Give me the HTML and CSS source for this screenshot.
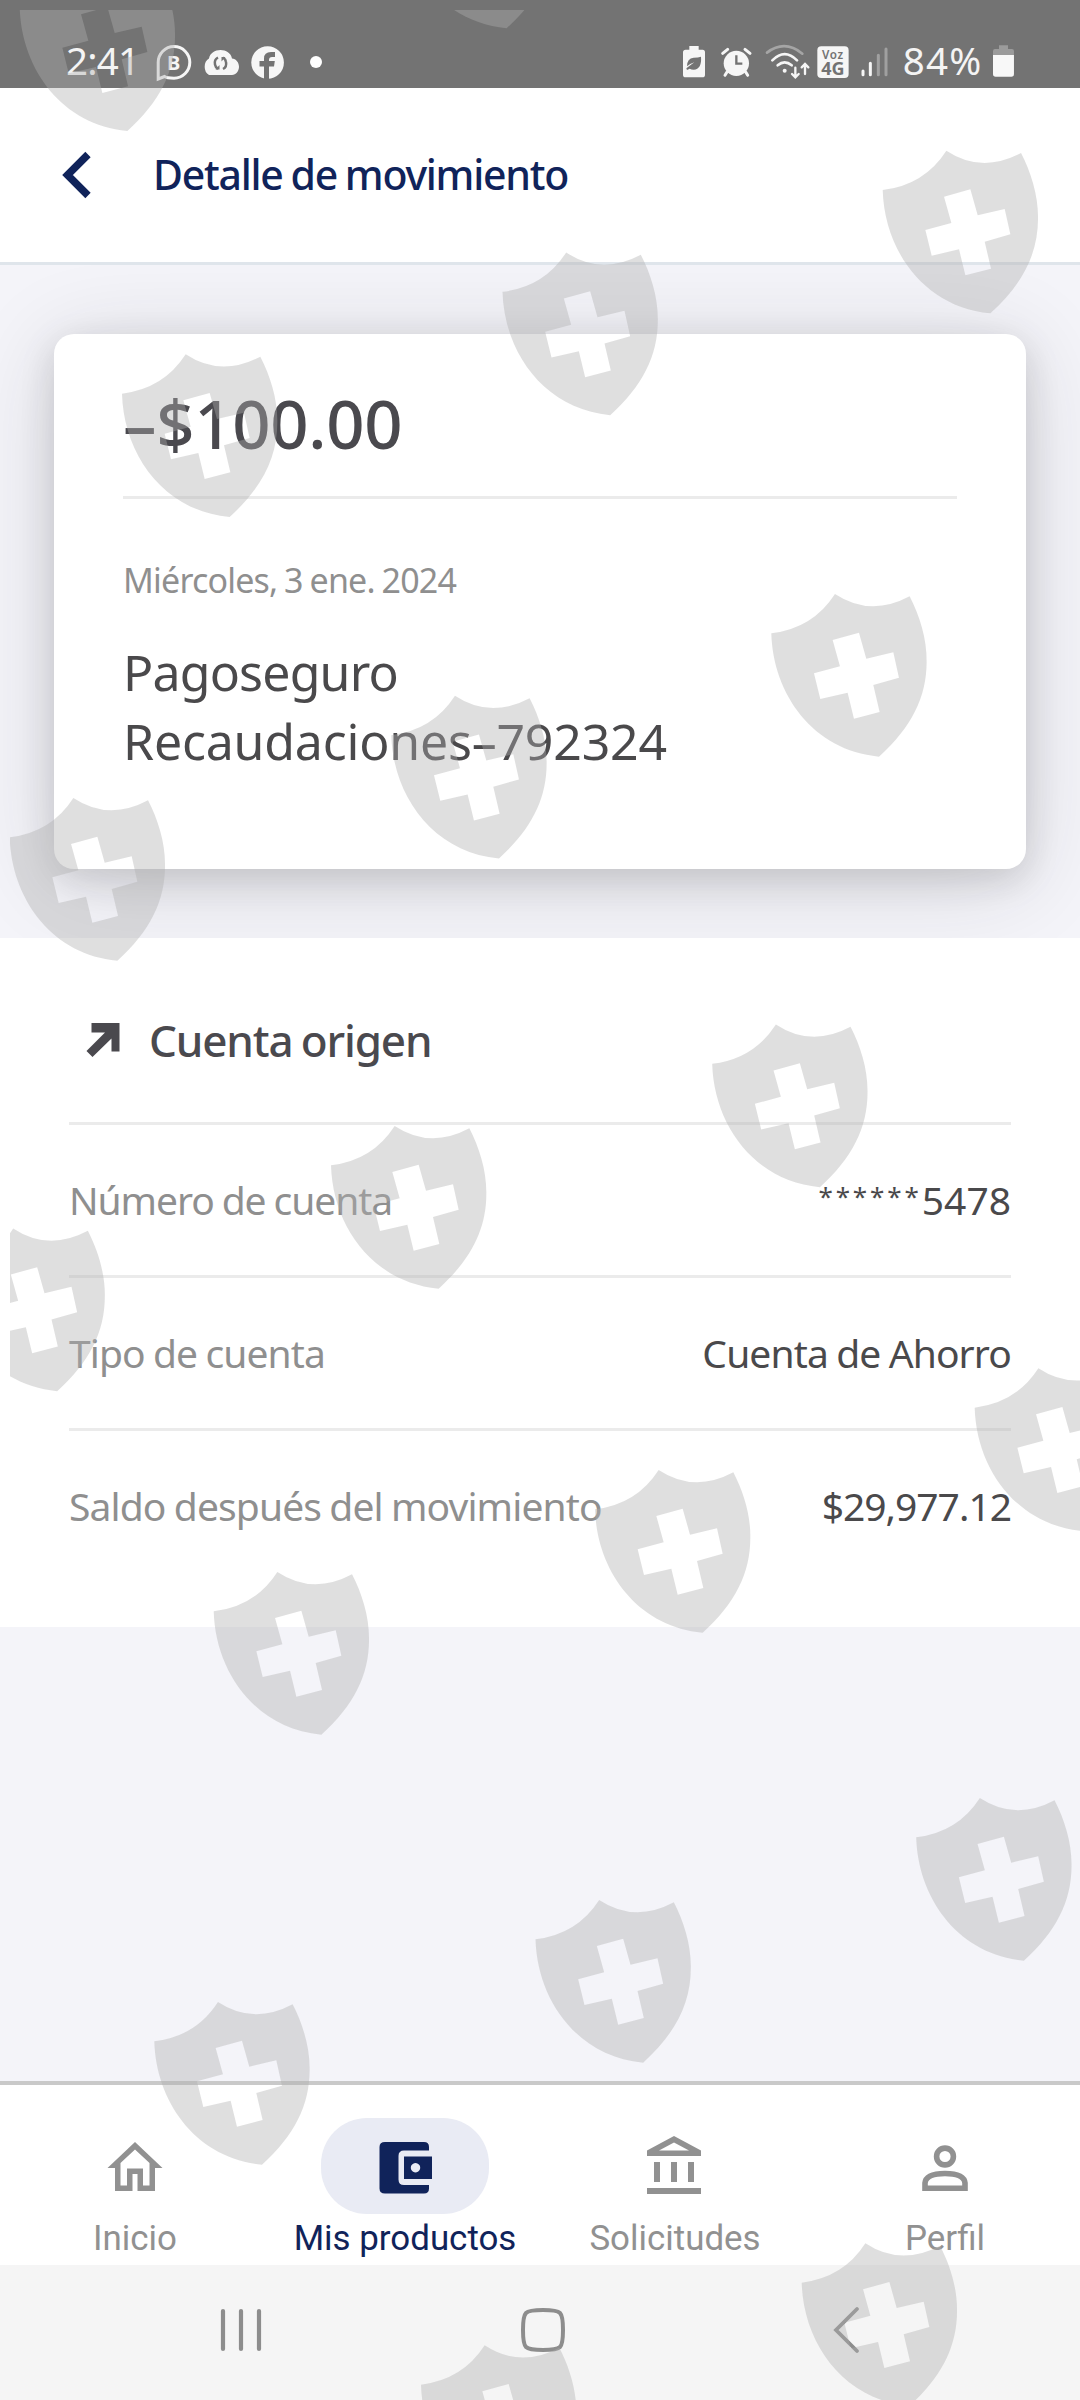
FILE: index.html
```html
<!DOCTYPE html>
<html lang="es">
<head>
<meta charset="utf-8">
<title>Detalle de movimiento</title>
<link rel="stylesheet" href="styles.css">
</head>
<body>
<div class="screen">
  <div class="statusbar">
    <div class="status-left">
      <span class="clock">2:41</span>
      <svg class="i-chat" viewBox="155 40 38 40"><path d="M158.200 79 L158.200 62.500 A15.800 15.800 0 1 1 174 78.200 Q167 78.200 164.500 76.500 Z" fill="none" stroke="#f6f6f6" stroke-width="3"/><text x="167" y="70" class="chat-b">B</text></svg>
      <svg class="i-cloud" viewBox="201 40 40 40"><path d="M209 75a7.200 9 0 0 1 0-16.500C210 53 215 50 220.500 50s10.500 3 11.500 8.500c4 .3 7 4 7 8.300s-3 8.200-7 8.200z" fill="#f6f6f6"/><path d="M218 57.500q-4 2-3 7 .5 3 3 4.500M223 69q4-2 3-7-.5-3-3-4.500" fill="none" stroke="#737373" stroke-width="2.500"/><path d="M215.500 69.500h4v-4.500zM225.500 57h-4v4.500z" fill="#737373"/></svg>
      <svg class="i-fb" viewBox="250 40 36 40"><circle cx="267.600" cy="62.500" r="16.300" fill="#f6f6f6"/><path d="M264 80V66.500h-4.500V61h4.500v-2.500q0-6.500 7-6.500h4v5h-3q-3 0-3 3v1h5.800l-.8 5.500h-5V80z" fill="#737373"/></svg>
      <i class="dot"></i>
    </div>
    <div class="status-right">
      <svg class="i-leaf" viewBox="129 120 66 120"><path d="M148 138h28v11h12q7 0 7 8v67q0 8-8 8h-50q-8 0-8-8v-67q0-8 8-8h11z" fill="#f6f6f6"/><path d="M183 170q3 37-22 39-7 0-12-3l-8 4-2-5 24-18q-14 4-22 12 0-24 20-26 14 0 22-3z" fill="#737373"/></svg>
      <svg class="i-alarm" viewBox="244 120 92 120"><circle cx="290" cy="190" r="38" fill="#f6f6f6"/><path d="M249 160l15-12M331 160l-15-12M262 216l-6 10M318 216l6 10" stroke="#f6f6f6" stroke-width="9" stroke-linecap="round"/><path d="M290 166v25h18" fill="none" stroke="#737373" stroke-width="7"/></svg>
      <svg class="i-wifi" viewBox="375 120 140 120"><g fill="none" stroke="#f6f6f6" stroke-width="8" stroke-linecap="round"><path d="M381 158q53-40 106 3" stroke="#a5a5a5"/><path d="M397 181q37-37 74 0"/><path d="M413 196q21-18 42 0"/><path d="M466 203v27M456 222l10 10 10-10M495 222v-28M485 202l10-10 10 10" stroke-width="7"/></g><circle cx="434" cy="212" r="6" fill="#f6f6f6"/></svg>
      <svg class="i-volte" viewBox="532 120 97 120"><rect x="533" y="139" width="94" height="95" rx="12" fill="#f6f6f6"/><text x="580" y="176" class="volte-top">Voz</text><text x="580" y="225" class="volte-bottom">4G</text></svg>
      <svg class="i-signal" viewBox="660 120 86 120"><g stroke-width="9" stroke-linecap="round"><path d="M669 213v11M691 190v34" stroke="#f6f6f6"/><path d="M715 166v58M738 147v77" stroke="#a0a0a0"/></g></svg>
      <span class="percent">84%</span>
      <svg class="i-batt" viewBox="1059 120 64 120"><path d="M1077 136h27v11h12q6 0 6 6v12h-63v-12q0-6 6-6h12z" fill="#9b9b9b"/><path d="M1059 165h63v57q0 8-8 8h-47q-8 0-8-8z" fill="#f8f8f8"/></svg>
    </div>
  </div>

  <header class="header">
    <svg class="back" viewBox="0 0 28 46"><path d="M25 2.500L4.500 23 25 43.500" fill="none" stroke="#10235a" stroke-width="7.500"/></svg>
    <h1 class="title">Detalle de movimiento</h1>
  </header>

  <main class="summary">
    <section class="card">
      <div class="amount">–$100.00</div>
      <div class="date">Miércoles, 3 ene. 2024</div>
      <div class="concept"><span class="concept-name">Pagoseguro</span><br>Recaudaciones–792324</div>
    </section>
  </main>

  <section class="account">
    <div class="account-head">
      <svg class="arrow" viewBox="0 0 34 34"><path d="M5.500 0h28v28.500h-8V15.500L6.500 34 .5 28 19 9.500H5.500z" fill="#4a494e"/></svg>
      <h2 class="account-title">Cuenta origen</h2>
    </div>
    <div class="row"><span class="label l1">Número de cuenta</span><span class="value v1"><span class="mask">******</span>5478</span></div>
    <div class="row"><span class="label l2">Tipo de cuenta</span><span class="value v2">Cuenta de Ahorro</span></div>
    <div class="row"><span class="label l3">Saldo después del movimiento</span><span class="value v3">$29,977.12</span></div>
  </section>
  <div class="filler"></div>

  <nav class="tabs">
    <div class="tab"><div class="pill"><svg class="tab-icon" viewBox="0 0 56 58"><path d="M28 4L.5 30H8v23h17.500V36h5v17H48V30h7.500zM28 11.500L42.500 25v22.500H36V30.500H20v17h-6.500V25z" fill="#919191" fill-rule="evenodd"/></svg></div>Inicio</div>
    <div class="tab active"><div class="pill on"><svg class="tab-icon" viewBox="-1 0 56 58"><path d="M7 4h39q5 0 5 5v3.500H26q-5.500 0-5.500 5.500v23.500q0 5.500 5.500 5.500h25v3.500q0 5-5 5H7q-5.500 0-5.500-5V9q0-5 5.500-5zM26 18.500h28v22.500H26zM37.500 25a4.700 4.700 0 1 0 .01 0z" fill="#10235a" fill-rule="evenodd"/></svg></div>Mis productos</div>
    <div class="tab"><div class="pill"><svg class="tab-icon" viewBox="1 0 56 58"><path d="M1 12.500L28 -2 55 12.500V18H1zM13 12.500h30L28 4.500zM8 24h6v20H8zM25 24h6v20h-6zM42 24h6v20h-6zM1 50h54v6H1z" fill="#919191" fill-rule="evenodd"/></svg></div>Solicitudes</div>
    <div class="tab"><div class="pill"><svg class="tab-icon" viewBox="0 0 56 58"><g fill="none" stroke="#919191" stroke-width="5.600"><circle cx="28" cy="18.500" r="8.400"/><path d="M8 50.200V45Q9 35.500 28 35.500T48 45v5.200z"/></g></svg></div>Perfil</div>
  </nav>

  <div class="sysnav">
    <svg class="s-recent" viewBox="0 0 44 48"><path d="M4 5v38M22 5v38M40 5v38" stroke="#8d8d8d" stroke-width="4.200" stroke-linecap="round"/></svg>
    <svg class="s-home" viewBox="0 0 48 48"><path d="M24 4q14 0 17 3t3 17-3 17-17 3-17-3-3-17 3-17 17-3z" fill="none" stroke="#8d8d8d" stroke-width="4"/></svg>
    <svg class="s-back" viewBox="0 0 28 48"><path d="M25 3L4 24l21 21" fill="none" stroke="#8d8d8d" stroke-width="3.800" stroke-linecap="round"/></svg>
  </div>

  <svg class="shields" viewBox="0 0 1080 2400">
    <defs>
      <clipPath id="edge"><rect x="10" y="10" width="1070" height="2390"/></clipPath>
      <path id="shield" transform="scale(.33333)" fill-rule="evenodd" d="M191 0Q297 70 415 7C445 65 467 135 466 203C466 310 420 400 323 488C125 470 5 300 0 118Q125 103 191 0ZM184 138L263 116 285 194 366 175 383 251 306 273 325 354 248 374 229 296 147 315 128 238 206 217Z"/>
    </defs>
    <g clip-path="url(#edge)" fill="#b0b0ae" fill-opacity=".4">
      <use href="#shield" x="19.700" y="-31.700"/><use href="#shield" x="399" y="-134.500"/>
      <use href="#shield" x="882.700" y="150.700"/><use href="#shield" x="502.500" y="252.500"/><use href="#shield" x="122" y="354.300"/>
      <use href="#shield" x="771.300" y="594"/><use href="#shield" x="391.300" y="695.800"/><use href="#shield" x="9.700" y="798"/>
      <use href="#shield" x="712.200" y="1024.500"/><use href="#shield" x="331" y="1126"/><use href="#shield" x="-50.500" y="1228.500"/>
      <use href="#shield" x="974.700" y="1368.300"/><use href="#shield" x="595" y="1470"/><use href="#shield" x="213.700" y="1572"/>
      <use href="#shield" x="916.200" y="1798"/><use href="#shield" x="535.500" y="1900"/><use href="#shield" x="154.300" y="2002"/>
      <use href="#shield" x="801.700" y="2243.300"/><use href="#shield" x="421" y="2345.300"/>
    </g>
  </svg>
</div>
</body>
</html>
```
FILE: styles.css
```css
* { box-sizing: border-box; }
body { margin: 0; background: #f4f4f9; font-family: "Noto Sans", "Open Sans", sans-serif; }
h1, h2 { margin: 0; font-weight: 500; }
svg { display: block; flex: none; overflow: visible; }
.screen { position: relative; width: 1080px; height: 2400px; overflow: hidden; display: flex; flex-direction: column; }

.statusbar { height: 88px; flex: none; background: #737373; color: #f4f4f4; padding: 40px 66px 0 66px; display: flex; justify-content: space-between; }
.status-left, .status-right { display: flex; height: 40px; }
.clock, .percent { font-weight: 400; font-size: 38.500px; line-height: 40px; }
.clock { width: 89px; letter-spacing: -.8px; }
.i-chat { width: 38px; height: 40px; }
.i-cloud { width: 40px; height: 40px; margin-left: 8px; }
.i-fb { width: 36px; height: 40px; margin-left: 9px; }
.dot { width: 12px; height: 12px; border-radius: 50%; background: #fff; margin: 16px 0 0 24px; }
.chat-b { font: 700 20px "Noto Sans", sans-serif; fill: #f6f6f6; }
.i-leaf { width: 22px; height: 40px; margin-right: 16.300px; }
.i-alarm { width: 30.700px; height: 40px; margin-right: 13px; }
.i-wifi { width: 46.700px; height: 40px; margin-right: 5.700px; }
.i-volte { width: 32.300px; height: 40px; margin-right: 10.300px; }
.i-signal { width: 28.700px; height: 40px; margin-right: 14.300px; }
.percent { width: 90px; letter-spacing: 1.200px; }
.i-batt { width: 21.300px; height: 40px; }
.volte-top { font: 600 35px "Noto Sans", sans-serif; fill: #737373; text-anchor: middle; letter-spacing: 2px; }
.volte-bottom { font: 700 54px "Noto Sans", sans-serif; fill: #737373; text-anchor: middle; }

.header { height: 177px; flex: none; background: #fff; border-bottom: 3px solid #dfe5eb; padding: 0 63px; display: flex; align-items: center; }
.back { width: 28px; height: 46px; }
.title { margin-left: 62px; font-size: 41px; line-height: 54px; padding-bottom: 2px; letter-spacing: -1.250px; word-spacing: -1.500px; color: #10235a; }

.summary { height: 673px; flex: none; overflow: hidden; padding: 69px 54px 0; background: #f4f4f9; }
.card { height: 535px; background: #fff; border-radius: 20px; padding: 0 69px; box-shadow: 0 12px 90px rgba(40, 40, 45, .16), 0 10px 34px rgba(40, 40, 42, .15); }
.amount { height: 165px; border-bottom: 3px solid #ebebeb; font-size: 67px; font-weight: 500; line-height: 178px; letter-spacing: -.3px; color: #4a494e; }
.date { padding-top: 57px; font-size: 34px; line-height: 48px; letter-spacing: -.8px; word-spacing: -1.300px; color: #8f8f8f; }
.concept { padding-top: 34px; font-size: 50px; line-height: 69px; letter-spacing: -.2px; color: #4a494b; }
.concept-name { letter-spacing: -.8px; }

.account { height: 689px; flex: none; background: #fff; padding: 0 69px; }
.account-head { height: 184px; padding: 20px 17px 0; display: flex; align-items: center; }
.arrow { width: 34px; height: 34px; }
.account-title { margin-left: 29px; font-size: 44px; line-height: 60px; letter-spacing: -1.150px; word-spacing: -2px; color: #4a494e; }
.row { height: 153px; border-top: 3px solid #ebebeb; display: flex; justify-content: space-between; font-size: 39px; line-height: 149px; word-spacing: -1px; }
.label { color: #8f8f8f; }
.value { color: #4a494b; }
.l1 { letter-spacing: -1.080px; }
.l2 { letter-spacing: -.900px; }
.l3 { letter-spacing: -.880px; }
.v2 { letter-spacing: -.880px; }
.v3 { letter-spacing: -1px; }
.mask { font-size: 26px; line-height: 1; vertical-align: 9px; letter-spacing: 2.900px; }
.filler { flex: 1; }

.tabs { height: 184px; flex: none; background: #fff; border-top: 4px solid #c9c9c9; padding-top: 33px; display: flex; font-family: Roboto, sans-serif; font-size: 34.900px; line-height: 40px; color: #919191; }
.tab { width: 270px; display: flex; flex-direction: column; align-items: center; gap: 5px; }
.active { color: #10235a; }
.pill { width: 168px; height: 96px; border-radius: 46px; display: flex; justify-content: center; padding-top: 20px; }
.on { background: #e9ebf4; }
.tab-icon { width: 56px; height: 58px; }
.sysnav { height: 135px; flex: none; background: #f5f5f5; display: flex; align-items: flex-start; padding: 41px 0 0 219px; }
.s-recent { width: 44px; height: 48px; }
.s-home { width: 48px; height: 48px; margin-left: 256px; }
.s-back { width: 28px; height: 48px; margin-left: 265px; }
.shields { position: absolute; left: 0; top: 0; width: 1080px; height: 2400px; }
```
